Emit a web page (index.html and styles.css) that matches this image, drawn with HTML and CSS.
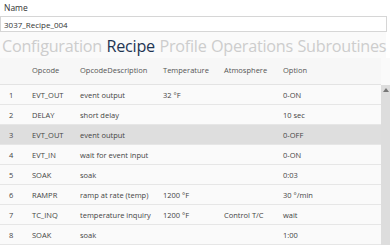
FILE: index.html
```html
<!DOCTYPE html>
<html lang="en">

<head>
    <meta charset="UTF-8" />
    <title>Recipe Editor</title>
    <link rel="stylesheet" href="styles.css">
</head>

<body>

    <div class="editor">
        <label class="field-label" for="name">Name</label>
        <div class="name-input" id="name">3037_Recipe_004</div>

        <div class="tabs">
            <span class="tab">Configuration</span>
            <span class="tab active">Recipe</span>
            <span class="tab">Profile</span>
            <span class="tab">Operations</span>
            <span class="tab">Subroutines</span>
        </div>

        <div class="grid">
            <div class="row head">
                <span></span>
                <span>Opcode</span>
                <span>OpcodeDescription</span>
                <span>Temperature</span>
                <span>Atmosphere</span>
                <span>Option</span>
            </div>

            <div class="body">
                <div class="rows">
                    <div class="row">
                        <span>1</span><span>EVT_OUT</span><span>event output</span><span>32 °F</span><span></span><span>0-ON</span>
                    </div>
                    <div class="row">
                        <span>2</span><span>DELAY</span><span>short delay</span><span></span><span></span><span>10 sec</span>
                    </div>
                    <div class="row selected">
                        <span>3</span><span>EVT_OUT</span><span>event output</span><span></span><span></span><span>0-OFF</span>
                    </div>
                    <div class="row">
                        <span>4</span><span>EVT_IN</span><span>wait for event input</span><span></span><span></span><span>0-ON</span>
                    </div>
                    <div class="row">
                        <span>5</span><span>SOAK</span><span>soak</span><span></span><span></span><span>0:03</span>
                    </div>
                    <div class="row">
                        <span>6</span><span>RAMPR</span><span>ramp at rate (temp)</span><span>1200 °F</span><span></span><span>30 °/min</span>
                    </div>
                    <div class="row">
                        <span>7</span><span>TC_INQ</span><span>temperature inquiry</span><span>1200 °F</span><span>Control T/C</span><span>wait</span>
                    </div>
                    <div class="row">
                        <span>8</span><span>SOAK</span><span>soak</span><span></span><span></span><span>1:00</span>
                    </div>
                </div>
                <div class="scrollbar">
                    <span class="arrow"></span>
                </div>
            </div>
        </div>
    </div>

</body>

</html>
```

FILE: styles.css
```css
body {
    margin: 0;
    background-color: #ffffff;
    font-family: 'Open Sans', 'Noto Sans', sans-serif;
    color: #444;
    overflow: hidden;
}

.editor {
    display: flex;
    flex-direction: column;
}

.field-label {
    display: block;
    font-size: 8.5px;
    line-height: 12px;
    padding: 2px 0 0 4px;
    color: #333;
}

.name-input {
    margin: 2px 3px 0 0;
    height: 14px;
    line-height: 15px;
    border: 1px solid #d6d6d6;
    padding-left: 3px;
    font-size: 8px;
    color: #333;
}

.tabs {
    display: flex;
    gap: 4.5px;
    padding: 2px 0 0 2px;
    margin-right: 4px;
    background-color: #fafafa;
    font-size: 16.2px;
    letter-spacing: -0.25px;
    line-height: 24px;
    height: 24px;
    white-space: nowrap;
}

.tab {
    color: #cdcdcd;
}

.tab.active {
    color: #1f3553;
}

.grid {
    background-color: #fafafa;
    font-size: 7.5px;
}

.row {
    display: grid;
    grid-template-columns: 28px 48px 83px 61px 59px 1fr;
    height: 19px;
    align-items: center;
    border-bottom: 1px solid #e6e6e6;
    white-space: nowrap;
}

.row span {
    padding-left: 4px;
}

.row span:first-child {
    padding-left: 9px;
}

.row.head {
    height: 27px;
    border-bottom: 1px solid #e3e3e3;
    margin-right: 9px;
    background-color: #f7f7f7;
    color: #555;
    align-items: start;
    padding-top: 7px;
    box-sizing: border-box;
}

.row.selected {
    background-color: #dedede;
}

.body {
    display: flex;
}

.rows {
    flex: 1;
}

.scrollbar {
    width: 9px;
    background-color: #dddddd;
    display: flex;
    justify-content: center;
    padding-top: 3px;
}

.arrow {
    width: 0;
    height: 0;
    border-left: 3px solid transparent;
    border-right: 3px solid transparent;
    border-bottom: 4px solid #777;
}
```
